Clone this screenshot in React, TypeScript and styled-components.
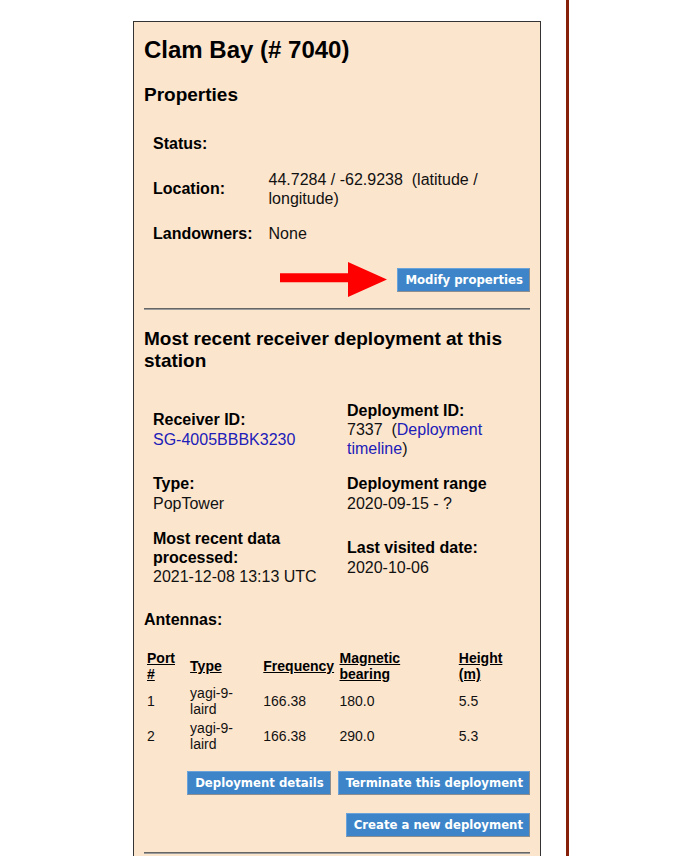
import styled, { createGlobalStyle } from 'styled-components';

const GlobalStyle = createGlobalStyle`
  html, body {
    margin: 0;
    padding: 0;
    height: 100%;
    overflow: hidden;
    background: #ffffff;
  }
  body {
    font-family: 'Liberation Sans', Arial, sans-serif;
    color: #111111;
  }
`;

interface Antenna {
  port: number;
  type: string;
  frequency: string;
  bearing: string;
  height: string;
}

const antennas: Antenna[] = [
  { port: 1, type: 'yagi-9-laird', frequency: '166.38', bearing: '180.0', height: '5.5' },
  { port: 2, type: 'yagi-9-laird', frequency: '166.38', bearing: '290.0', height: '5.3' },
];

const antennaColumns = [
  { label: 'Port\n#', width: 41 },
  { label: 'Type', width: 71 },
  { label: 'Frequency', width: 74 },
  { label: 'Magnetic\nbearing', width: 117 },
  { label: 'Height\n(m)', width: 70 },
];

function Arrow() {
  return (
    <svg width="107" height="35" viewBox="0 0 107 35">
      <polygon points="0,11.3 68,11.3 68,0 107,17.5 68,35 68,20.3 0,20.3" fill="#ff0000" />
    </svg>
  );
}

function App() {
  return (
    <Styled.Page>
      <GlobalStyle />
      <Styled.Panel>
        <Styled.Title>Clam Bay (# 7040)</Styled.Title>
        <Styled.Heading mt={20}>Properties</Styled.Heading>
        <Styled.InfoTable>
          <tbody>
            <tr>
              <Styled.Label>Status:</Styled.Label>
              <Styled.Value />
            </tr>
            <tr>
              <Styled.Label>Location:</Styled.Label>
              <Styled.Value>44.7284 / -62.9238&nbsp; (latitude / longitude)</Styled.Value>
            </tr>
            <tr>
              <Styled.Label>Landowners:</Styled.Label>
              <Styled.Value>None</Styled.Value>
            </tr>
          </tbody>
        </Styled.InfoTable>
        <Styled.ButtonRow mt={10} gap={10}>
          <Arrow />
          <Styled.Button>Modify properties</Styled.Button>
        </Styled.ButtonRow>
        <Styled.Divider mt={11} />

        <Styled.Heading mt={18}>Most recent receiver deployment at this station</Styled.Heading>
        <Styled.DeployTable>
          <tbody>
            <tr>
              <Styled.Cell>
                <b>Receiver ID:</b>
                <br />
                <Styled.Link>SG-4005BBBK3230</Styled.Link>
              </Styled.Cell>
              <Styled.Cell>
                <b>Deployment ID:</b>
                <br />
                7337&nbsp; (<Styled.Link>Deployment timeline</Styled.Link>)
              </Styled.Cell>
            </tr>
            <tr>
              <Styled.Cell>
                <b>Type:</b>
                <br />
                PopTower
              </Styled.Cell>
              <Styled.Cell>
                <b>Deployment range</b>
                <br />
                2020-09-15 - ?
              </Styled.Cell>
            </tr>
            <tr>
              <Styled.Cell>
                <b>Most recent data processed:</b>
                <br />
                2021-12-08 13:13 UTC
              </Styled.Cell>
              <Styled.Cell>
                <b>Last visited date:</b>
                <br />
                2020-10-06
              </Styled.Cell>
            </tr>
          </tbody>
        </Styled.DeployTable>

        <Styled.SubHeading>Antennas:</Styled.SubHeading>
        <Styled.AntennaTable>
          <thead>
            <tr>
              {antennaColumns.map((col) => (
                <Styled.Th key={col.label} style={{ width: col.width }}>
                  {col.label}
                </Styled.Th>
              ))}
            </tr>
          </thead>
          <tbody>
            {antennas.map((a) => (
              <tr key={a.port}>
                <Styled.Td>{a.port}</Styled.Td>
                <Styled.Td>{a.type}</Styled.Td>
                <Styled.Td>{a.frequency}</Styled.Td>
                <Styled.Td>{a.bearing}</Styled.Td>
                <Styled.Td>{a.height}</Styled.Td>
              </tr>
            ))}
          </tbody>
        </Styled.AntennaTable>

        <Styled.ButtonRow mt={17} gap={7}>
          <Styled.Button>Deployment details</Styled.Button>
          <Styled.Button>Terminate this deployment</Styled.Button>
        </Styled.ButtonRow>
        <Styled.ButtonRow mt={18}>
          <Styled.Button>Create a new deployment</Styled.Button>
        </Styled.ButtonRow>
        <Styled.Divider mt={15} />
        <Styled.Spacer />
      </Styled.Panel>
      <Styled.Rule />
    </Styled.Page>
  );
}

export default App;

const Styled = {
  Page: styled.div`
    display: flex;
    align-items: flex-start;
    height: 856px;
    padding-left: 133px;
  `,
  Panel: styled.div`
    width: 408px;
    box-sizing: border-box;
    margin-top: 21px;
    padding: 0 10px;
    background: #fce5cd;
    border: 1px solid #333333;
    border-bottom: none;
  `,
  Rule: styled.div`
    align-self: stretch;
    width: 3px;
    margin-left: 25px;
    background: #86200a;
  `,
  Title: styled.h1`
    margin: 14px 0 0;
    font-size: 24px;
    line-height: 28px;
    font-weight: bold;
    color: #000000;
  `,
  Heading: styled.h3<{ mt?: number }>`
    margin: ${({ mt }) => mt ?? 19}px 0 0;
    font-size: 19px;
    line-height: 22.3px;
    font-weight: bold;
    color: #000000;
  `,
  SubHeading: styled.h4`
    margin: 14.6px 0 0;
    font-size: 16px;
    line-height: 19.2px;
    font-weight: bold;
    color: #000000;
  `,
  InfoTable: styled.table`
    width: 100%;
    margin-top: 19px;
    border-spacing: 2px;
    font-size: 16px;
    line-height: 19.2px;
  `,
  Label: styled.td`
    width: 1%;
    padding: 7px;
    white-space: nowrap;
    font-weight: bold;
    color: #000000;
    vertical-align: middle;
  `,
  Value: styled.td`
    padding: 7px;
    vertical-align: middle;
  `,
  ButtonRow: styled.div<{ mt: number; gap?: number }>`
    display: flex;
    justify-content: flex-end;
    align-items: center;
    gap: ${({ gap }) => gap ?? 11}px;
    margin-top: ${({ mt }) => mt}px;
  `,
  Button: styled.button`
    height: 24px;
    box-sizing: border-box;
    padding: 0 6px 1px 7px;
    border: 1px solid;
    border-color: #6aa3d9 #8e8e8e #8e8e8e #6aa3d9;
    border-radius: 0;
    background: #3d85c8;
    color: #ffffff;
    font-family: 'DejaVu Sans Condensed', 'DejaVu Sans', Verdana, sans-serif;
    font-stretch: semi-condensed;
    font-size: 13px;
    font-weight: bold;
    white-space: nowrap;
    cursor: pointer;
  `,
  Divider: styled.div<{ mt: number }>`
    margin-top: ${({ mt }) => mt}px;
    border-top: 1px solid #666666;
    border-bottom: 1px solid #9a9a9a;
  `,
  DeployTable: styled.table`
    width: 100%;
    margin-top: 19px;
    border-spacing: 2px;
    font-size: 16px;
    line-height: 19.2px;
    table-layout: fixed;

    & td:first-child {
      width: 192px;
    }
    & b {
      color: #000000;
    }
  `,
  Cell: styled.td`
    padding: 7px;
    vertical-align: middle;
    box-sizing: border-box;
  `,
  Link: styled.a`
    color: #2020b8;
    text-decoration: none;
    cursor: pointer;
  `,
  AntennaTable: styled.table`
    width: 100%;
    margin-top: 18px;
    border-spacing: 2px;
    font-size: 14px;
    line-height: 16px;
    table-layout: fixed;
  `,
  Th: styled.th`
    padding: 0.5px 1px;
    text-align: left;
    font-weight: bold;
    text-decoration: underline;
    white-space: pre-line;
    color: #000000;
    vertical-align: middle;
    box-sizing: border-box;
  `,
  Td: styled.td`
    padding: 0.5px 1px;
    vertical-align: middle;
  `,
  Spacer: styled.div`
    height: 60px;
  `,
};
